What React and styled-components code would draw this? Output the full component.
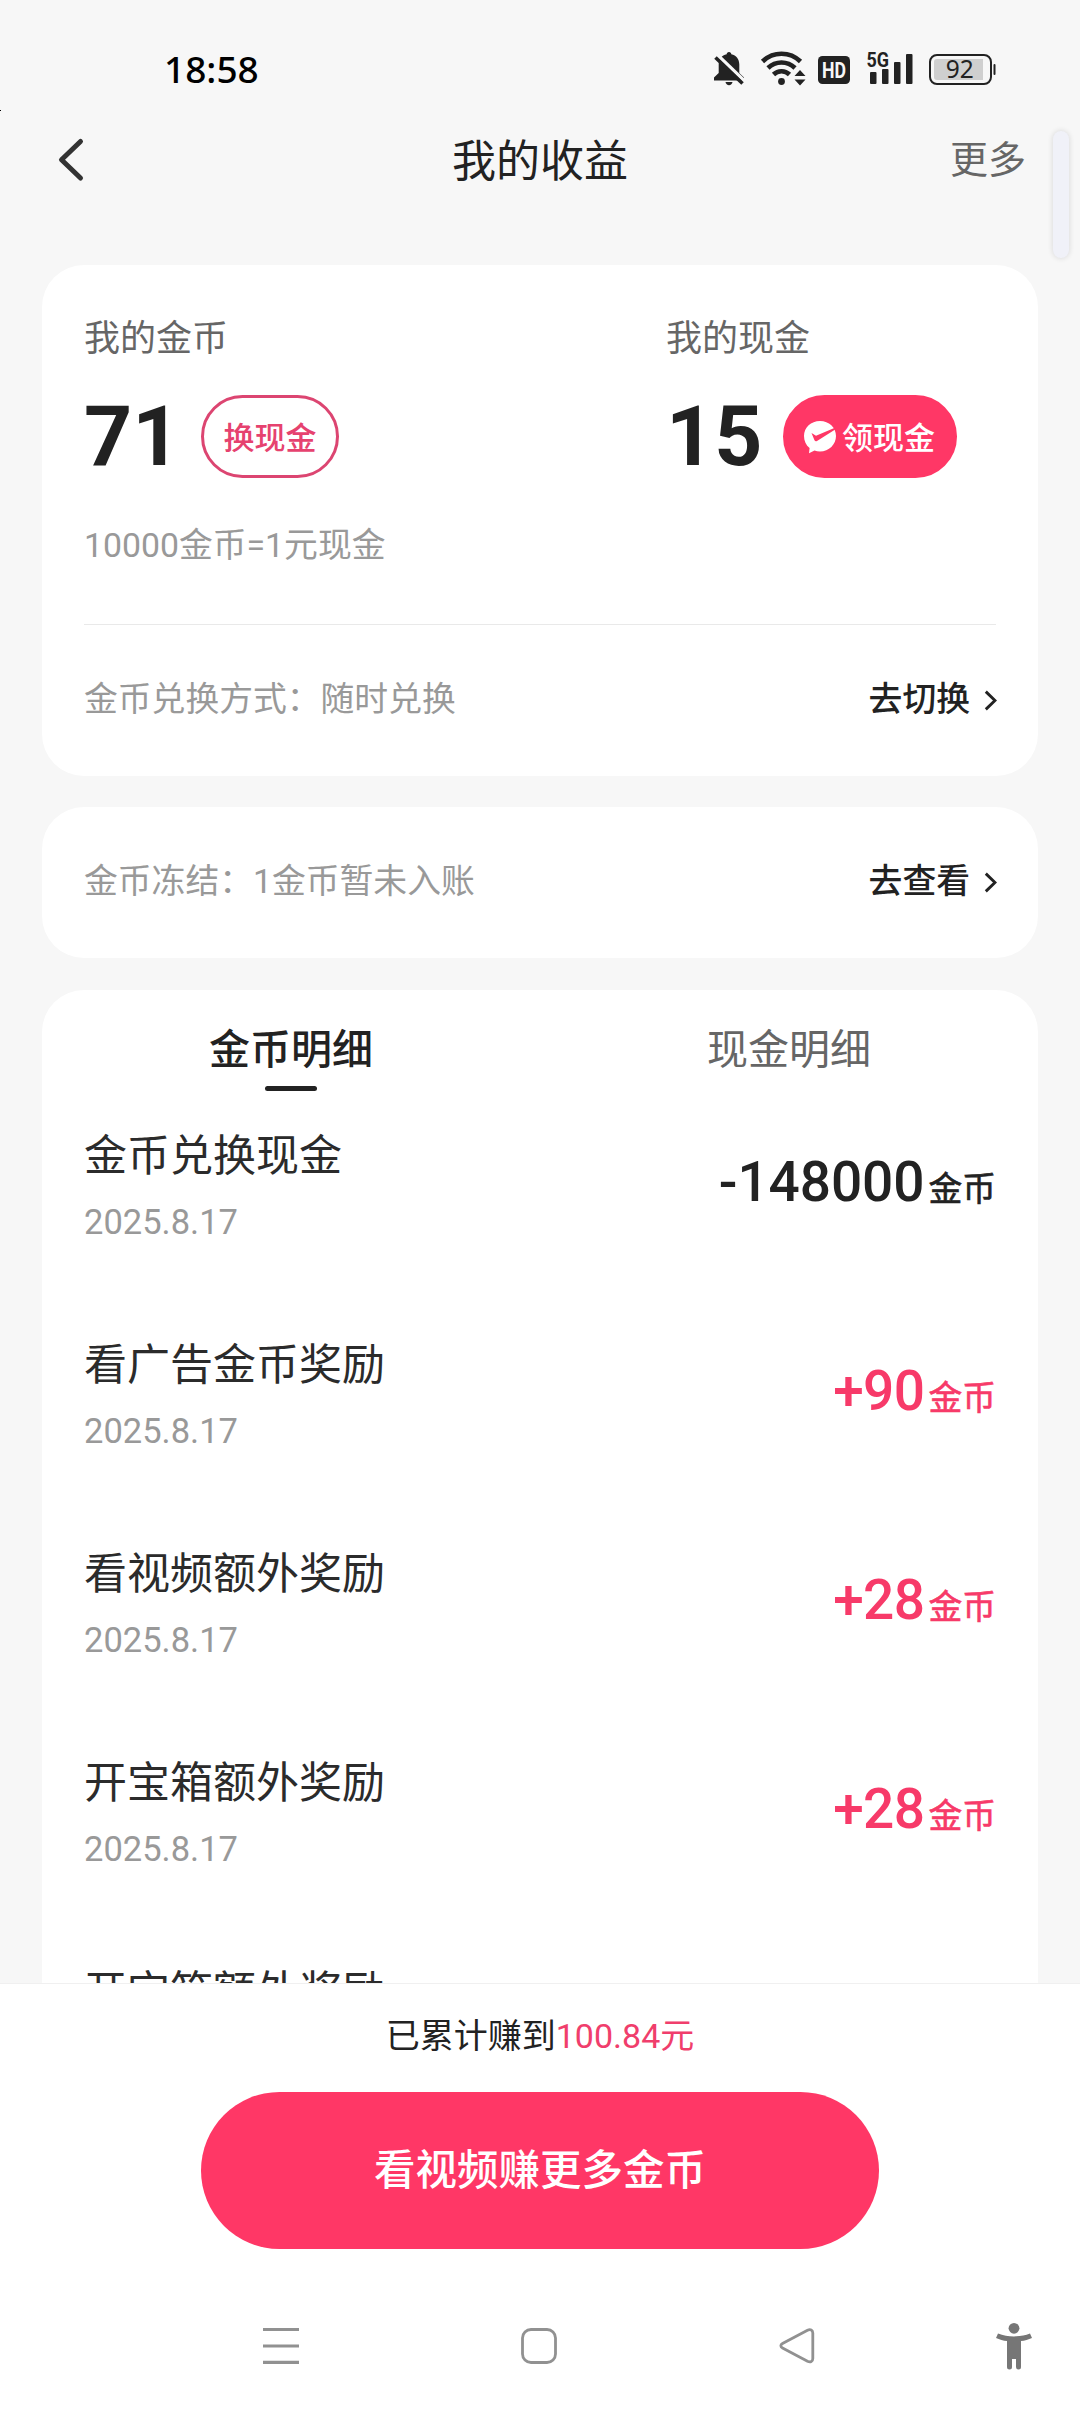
import styled, { createGlobalStyle } from "styled-components";
import { useState } from "react";

const GlobalStyle = createGlobalStyle`
    *{box-sizing: border-box;}
    body{
        margin: 0;
        background: #f7f7f7;
        font-family: Roboto, "Noto Sans CJK SC", sans-serif;
        color: #222;
    }
    button{
        margin: 0;
        padding: 0;
        border: 0;
        background: none;
        font: inherit;
        color: inherit;
    }
    svg{display: block; flex: none;}
`

const Screen = styled.div`
    position: relative;
    display: flex;
    flex-direction: column;
    width: 1080px;
    height: 2412px;
    overflow: hidden;
    background: #f7f7f7;
`

const StatusBar = styled.div`
    display: flex;
    align-items: center;
    justify-content: space-between;
    height: 110px;
    padding: 26px 82px 0 164px;
`

const Clock = styled.span`
    margin-top: 2px;
    font-family: "Noto Sans", sans-serif;
    font-size: 37px;
    font-weight: 500;
    line-height: 40px;
    color: #000;
`

const StatusIcons = styled.div`
    display: flex;
    align-items: center;
`

const Header = styled.header`
    display: grid;
    grid-template-columns: 1fr auto 1fr;
    align-items: center;
    height: 100px;
    padding: 0 54px 0 56px;
`

const Title = styled.h1`
    margin: 0;
    padding: 3px 2px 0 0;
    font-size: 44px;
    font-weight: 400;
    line-height: 50px;
`

const MoreButton = styled.button`
    justify-self: end;
    font-size: 38px;
    line-height: 44px;
    color: #666;
`

const SideHandle = styled.div`
    position: absolute;
    top: 131px;
    left: 1053px;
    width: 16px;
    height: 127px;
    border-radius: 8px;
    background: #f0f1f8;
    box-shadow: 0 0 5px 1px rgba(0, 0, 0, 0.1);
`

const EdgeMark = styled.div`
    position: absolute;
    top: 110px;
    left: 0;
    width: 1px;
    height: 1px;
    background: #000;
`

const Content = styled.main`
    display: flex;
    flex-direction: column;
    flex: 1;
    min-height: 0;
    padding: 55px 42px 0;
    overflow: hidden;
`

const Card = styled.section`
    flex: none;
    margin-bottom: ${props => props.$gap || 0}px;
    padding: 0 42px;
    border-radius: 42px;
    background: #fff;
`

const Balances = styled.div`
    display: grid;
    grid-template-columns: 582px 1fr;
    padding-top: 53px;
`

const Label = styled.div`
    font-size: 36px;
    line-height: 42px;
    color: #666;
`

const BalanceRow = styled.div`
    display: flex;
    align-items: center;
    height: 83px;
    margin-top: 35px;
`

const Amount = styled.span`
    width: ${props => props.width};
    font-size: 84px;
    font-weight: 700;
    line-height: 83px;
`

const Pill = styled.button`
    display: flex;
    align-items: center;
    justify-content: center;
    gap: 5px;
    width: ${props => props.$filled ? '174px' : '138px'};
    height: 83px;
    padding-bottom: 3px;
    border-radius: 42px;
    border: 3px solid ${props => props.$filled ? '#ff3766' : '#dc4571'};
    background: ${props => props.$filled ? '#ff3766' : '#fff'};
    color: ${props => props.$filled ? '#fff' : '#e6426f'};
    font-size: 31px;
    font-weight: 500;

    svg{margin: 3px 0 0 -2px;}
`

const Hint = styled.div`
    margin-top: 47px;
    font-size: 33.8px;
    line-height: 42px;
    color: #999;
`

const Divider = styled.div`
    height: 1px;
    margin-top: 57px;
    background: #e9e9e9;
`

const InfoRow = styled.div`
    display: flex;
    align-items: center;
    justify-content: space-between;
    height: 151px;
    font-size: 33.8px;
    line-height: 40px;
    color: #999;
`

const InfoText = styled.span`
    padding-bottom: 2px;
`

const InfoLink = styled.button`
    display: flex;
    align-items: center;
    gap: 14px;
    margin-right: -1px;
    font-weight: 500;
    color: #222;
`

const Tabs = styled.div`
    display: flex;
    margin: 0 -42px;
    padding-top: 35px;
`

const Tab = styled.button`
    display: flex;
    flex: 1;
    flex-direction: column;
    align-items: center;
    font-size: 41px;
    line-height: 50px;
    font-weight: ${props => props.$active ? 500 : 400};
    color: ${props => props.$active ? '#222' : '#666'};

    &::after{
        content: "";
        width: 52px;
        height: 5px;
        margin-top: 11px;
        border-radius: 3px;
        background: ${props => props.$active ? '#222' : 'transparent'};
    }
`

const RecordList = styled.ul`
    display: flex;
    flex-direction: column;
    gap: 98px;
    margin: 0;
    padding: 40px 0 0;
    list-style: none;
`

const Record = styled.li`
    display: flex;
    align-items: center;
    justify-content: space-between;
    height: 111px;
`

const RecordName = styled.div`
    font-size: 43px;
    line-height: 50px;
    color: #2b2b2b;
`

const RecordDate = styled.div`
    margin-top: 21px;
    font-size: 34.5px;
    line-height: 40px;
    color: #999;
`

const RecordValue = styled.div`
    display: flex;
    align-items: baseline;
    gap: 4px;
    padding-bottom: 2px;
    font-size: 55px;
    font-weight: 500;
    line-height: 60px;
    letter-spacing: ${props => props.$income ? '-0.6px' : '-0.1px'};
    color: ${props => props.$income ? '#f73a69' : '#222'};
`

const Unit = styled.span`
    font-size: 33.8px;
    font-weight: 400;
    letter-spacing: 0;
    -webkit-text-stroke: 0.6px currentColor;
`

const Footer = styled.footer`
    display: flex;
    flex-direction: column;
    align-items: center;
    height: 296px;
    border-top: 1px solid #f0f0f0;
    background: #fff;
`

const Total = styled.div`
    margin-top: 31px;
    font-size: 34px;
    line-height: 42px;
`

const TotalValue = styled.span`
    color: #f03e6c;
`

const WatchButton = styled.button`
    width: 678px;
    height: 157px;
    margin-top: 35px;
    padding-bottom: 7px;
    border-radius: 79px;
    background: #ff3766;
    color: #fff;
    font-size: 41.5px;
    font-weight: 500;
`

const NavBar = styled.nav`
    height: 133px;
    background: #fff;
`

const records = [
    { name: "金币兑换现金", date: "2025.8.17", value: "-148000" },
    { name: "看广告金币奖励", date: "2025.8.17", value: "+90" },
    { name: "看视频额外奖励", date: "2025.8.17", value: "+28" },
    { name: "开宝箱额外奖励", date: "2025.8.17", value: "+28" },
    { name: "开宝箱额外奖励", date: "2025.8.17", value: "+28" },
]

function StatusGlyphs() {
    return (
        <StatusIcons>
            <svg width="288" height="40" viewBox="710 48 288 40" fill="#222">
                {/* muted bell */}
                <path d="M729 52c1.500 0 2.200 1 2.300 2.200 5 1.100 8 5 8 10.300v8.500l4.700 4.500v3h-30v-3l4.700-4.500v-8.500c0-5.300 3-9.200 8-10.300.1-1.200.8-2.200 2.300-2.200z" />
                <path d="M725.500 82h7c-.3 2-1.700 3.200-3.500 3.200s-3.200-1.200-3.500-3.200z" />
                <path d="M717.500 55l28 27" stroke="#f7f7f7" strokeWidth="3.500" />
                <path d="M715.500 57.500l27 26" stroke="#222" strokeWidth="3.600" />
                {/* wifi */}
                <g fill="none" stroke="#222" strokeWidth="4.600">
                    <path d="M762.500 61.500a27 27 0 0 1 38 0" />
                    <path d="M768 68a19.500 19.500 0 0 1 27 0" />
                    <path d="M773.500 74.500a11.500 11.500 0 0 1 16 0" />
                </g>
                <circle cx="781.500" cy="81.500" r="3.400" />
                <path d="M800 70l5.500 6h-11zM800 85.500l5.500-6h-11z" />
                {/* hd */}
                <rect x="818" y="56" width="32" height="28" rx="4.500" />
                <text x="834" y="78" textAnchor="middle" fontFamily="Roboto" fontWeight="700" fontSize="22" textLength="24" lengthAdjust="spacingAndGlyphs" fill="#f7f7f7">HD</text>
                {/* signal */}
                <text x="866.500" y="66.500" fontFamily="Roboto" fontWeight="700" fontSize="20" textLength="22.500" lengthAdjust="spacingAndGlyphs">5G</text>
                <rect x="870" y="72" width="6.500" height="12" rx="1" />
                <rect x="882" y="69" width="6.500" height="15" rx="1" />
                <rect x="894" y="62" width="6.500" height="22" rx="1" />
                <rect x="906" y="54" width="6.500" height="30" rx="1" />
                {/* battery */}
                <rect x="930" y="55" width="61" height="29" rx="7" fill="none" stroke="#222" strokeWidth="2" />
                <path d="M937 59h46v21h-46a3 3 0 0 1-3-3v-15a3 3 0 0 1 3-3z" fill="#cfcfcf" />
                <rect x="993.500" y="64" width="2" height="11" rx="1" />
                <text x="959.800" y="78.300" textAnchor="middle" fontFamily="Noto Sans" fontSize="24.500">92</text>
            </svg>
        </StatusIcons>
    );
}

function ArrowRight() {
    return (
        <svg width="13" height="21" viewBox="0 0 13 21" fill="none" stroke="#222" strokeWidth="2.900">
            <path d="M1.800 1.600L11 10.500 1.800 19.400" />
        </svg>
    );
}

function PayIcon() {
    return (
        <svg width="34" height="34" viewBox="0 0 34 34">
            <path d="M17 1c9 0 16 6.600 16 15s-7 15.500-16 15.500c-2 0-3.800-.3-5.500-.9L6 33.200l.6-5.200C3 25.300 1 21 1 16 1 7.600 8 1 17 1z" fill="#fff" />
            <path d="M8.500 13l4.500 2.800L32.500 7.500 33 9 14 21c-1 .6-2 .3-2.500-.7z" fill="#ff3766" />
        </svg>
    );
}

function NavIcons() {
    return (
        <svg width="1080" height="133" viewBox="0 2279 1080 133" fill="none" stroke="#919191" strokeWidth="2.800">
            <path d="M263 2329.500h36M263 2346h36M263 2362.300h36" strokeWidth="3.200" />
            <rect x="522.500" y="2329.500" width="33" height="33" rx="8.500" />
            <path d="M782.500 2343.600L807.500 2330.200C810.500 2328.700 812.800 2330 812.800 2333V2358.500C812.800 2361.500 810.500 2362.800 807.500 2361.300L782.500 2348C780.300 2346.800 780.300 2344.800 782.500 2343.600z" />
            <g fill="#767676" stroke="none">
                <circle cx="1014" cy="2328.300" r="5.400" />
                <path d="M998 2333.500c5 2 10.500 2.900 16 2.900s11-.9 16-2.900l2 4.400c-3.500 1.500-7.300 2.600-11 3.200V2367a2.500 2.500 0 0 1-5 0v-8h-4v8a2.500 2.500 0 0 1-5 0v-25.900c-3.700-.6-7.500-1.700-11-3.200z" />
            </g>
        </svg>
    );
}

function App() {

    let [tab,setTab] = useState('coin');

    return (
        <>
            <GlobalStyle/>
            <Screen>
                <StatusBar>
                    <Clock>18:58</Clock>
                    <StatusGlyphs/>
                </StatusBar>
                <Header>
                    <svg width="30" height="46" viewBox="0 0 30 46" fill="none" stroke="#333" strokeWidth="5" strokeLinecap="round" strokeLinejoin="round">
                        <path d="M24.500 4.500L5.500 22.800 24.500 41"/>
                    </svg>
                    <Title>我的收益</Title>
                    <MoreButton>更多</MoreButton>
                </Header>
                <Content>
                    <Card $gap={31}>
                        <Balances>
                            <div>
                                <Label>我的金币</Label>
                                <BalanceRow>
                                    <Amount width="117px">71</Amount>
                                    <Pill>换现金</Pill>
                                </BalanceRow>
                            </div>
                            <div>
                                <Label>我的现金</Label>
                                <BalanceRow>
                                    <Amount width="117px">15</Amount>
                                    <Pill $filled><PayIcon/>领现金</Pill>
                                </BalanceRow>
                            </div>
                        </Balances>
                        <Hint>10000金币=1元现金</Hint>
                        <Divider/>
                        <InfoRow>
                            <InfoText>金币兑换方式：随时兑换</InfoText>
                            <InfoLink><InfoText>去切换</InfoText><ArrowRight/></InfoLink>
                        </InfoRow>
                    </Card>
                    <Card $gap={32}>
                        <InfoRow>
                            <InfoText>金币冻结：1金币暂未入账</InfoText>
                            <InfoLink><InfoText>去查看</InfoText><ArrowRight/></InfoLink>
                        </InfoRow>
                    </Card>
                    <Card>
                        <Tabs>
                            <Tab $active={tab === 'coin'} onClick={() => setTab('coin')}>金币明细</Tab>
                            <Tab $active={tab === 'cash'} onClick={() => setTab('cash')}>现金明细</Tab>
                        </Tabs>
                        <RecordList>
                            {records.map((item, i) => (
                                <Record key={i}>
                                    <div>
                                        <RecordName>{item.name}</RecordName>
                                        <RecordDate>{item.date}</RecordDate>
                                    </div>
                                    <RecordValue $income={item.value.startsWith('+')}>
                                        {item.value}<Unit>金币</Unit>
                                    </RecordValue>
                                </Record>
                            ))}
                        </RecordList>
                    </Card>
                </Content>
                <Footer>
                    <Total>已累计赚到<TotalValue>100.84元</TotalValue></Total>
                    <WatchButton>看视频赚更多金币</WatchButton>
                </Footer>
                <NavBar><NavIcons/></NavBar>
                <SideHandle/>
                <EdgeMark/>
            </Screen>
        </>
    );
}

export default App;
